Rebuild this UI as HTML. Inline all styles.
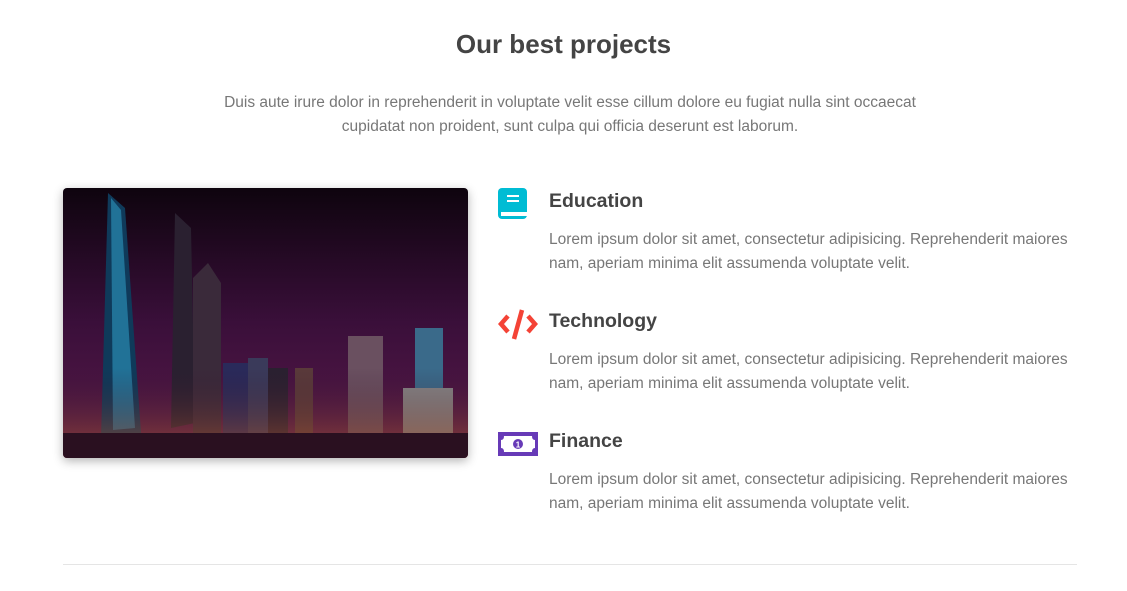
<!DOCTYPE html>
<html><head><style>
body{margin:0;width:1127px;height:591px;background:#fff;font-family:"Liberation Sans",sans-serif;position:relative;overflow:hidden}
h2{position:absolute;top:26px;left:0;width:1127px;text-align:center;margin:0;font-size:26px;font-weight:bold;color:#444;line-height:36px}
.sub{position:absolute;top:91px;left:210px;width:720px;text-align:center;font-size:15.5px;color:#777;line-height:24px}
.img{position:absolute;left:63px;top:188px;width:405px;height:270px;border-radius:4px;overflow:hidden;box-shadow:0 3px 10px rgba(0,0,0,.3)}
.it h4{position:absolute;left:549px;margin:0;font-size:19.5px;font-weight:bold;color:#444;line-height:24px}
.it p{position:absolute;left:549px;margin:0;width:540px;font-size:15.5px;color:#777;line-height:24px}
.ic{position:absolute;left:498px}
hr{position:absolute;top:564px;left:63px;width:1014px;margin:0;border:0;border-top:1px solid #e5e5e5}
</style></head><body>
<h2>Our best projects</h2>
<div class="sub">Duis aute irure dolor in reprehenderit in voluptate velit esse cillum dolore eu fugiat nulla sint occaecat cupidatat non proident, sunt culpa qui officia deserunt est laborum.</div>
<div class="img"><svg width="405" height="270" viewBox="0 0 405 270">
<defs><linearGradient id="s" x1="0" y1="0" x2="0" y2="1"><stop offset="0" stop-color="#0e040e"/><stop offset=".5" stop-color="#3a0f3a"/><stop offset="1" stop-color="#5a1a4a"/></linearGradient>
<linearGradient id="g" x1="0" y1="0" x2="0" y2="1"><stop offset="0" stop-color="#2a1030" stop-opacity="0"/><stop offset="1" stop-color="#b05a30"/></linearGradient></defs>
<rect width="405" height="270" fill="url(#s)"/>
<polygon points="45,5 62,20 78,245 38,250" fill="#0f3a5a"/>
<polygon points="48,10 58,22 72,240 50,242" fill="#2a8ab0" opacity=".7"/>
<polygon points="112,25 128,40 132,235 108,240" fill="#2a2030"/>
<polygon points="130,90 145,75 158,95 158,250 130,250" fill="#3a2a3a"/>
<rect x="160" y="175" width="25" height="80" fill="#2a2a5a"/>
<rect x="185" y="170" width="20" height="85" fill="#3a3a5a"/>
<rect x="205" y="180" width="20" height="75" fill="#2a2030"/>
<rect x="232" y="180" width="18" height="70" fill="#5a3a3a"/>
<rect x="285" y="148" width="35" height="110" fill="#6a5060"/>
<rect x="352" y="140" width="28" height="130" fill="#3a6a8a"/>
<rect x="340" y="200" width="50" height="70" fill="#888"/>
<rect x="0" y="180" width="405" height="90" fill="url(#g)" opacity=".7"/>
<rect x="0" y="245" width="405" height="25" fill="#2a1020"/>
</svg></div>
<div class="it">
<svg class="ic" style="top:188px" width="30" height="32" viewBox="0 0 30 32"><rect x="0" y="0" width="29" height="31" rx="4" fill="#00bcd4"/><rect x="3" y="24" width="26" height="4" fill="#fff"/><rect x="9" y="7" width="12" height="2" fill="#fff"/><rect x="9" y="12" width="12" height="2" fill="#fff"/></svg>
<h4 style="top:189px">Education</h4>
<p style="top:228px">Lorem ipsum dolor sit amet, consectetur adipisicing. Reprehenderit maiores nam, aperiam minima elit assumenda voluptate velit.</p>
<svg class="ic" style="top:308px" width="40" height="33" viewBox="0 0 40 33"><path d="M10 8 L3 16 L10 24 M30 8 L37 16 L30 24" stroke="#f44336" stroke-width="4.5" fill="none"/><path d="M24 2 L16 31" stroke="#f44336" stroke-width="4.5"/></svg>
<h4 style="top:309px">Technology</h4>
<p style="top:348px">Lorem ipsum dolor sit amet, consectetur adipisicing. Reprehenderit maiores nam, aperiam minima elit assumenda voluptate velit.</p>
<svg class="ic" style="top:432px" width="40" height="24" viewBox="0 0 40 24"><rect x="0" y="0" width="40" height="24" fill="#673ab7"/><path d="M6 4 H34 Q34 8 37 8 V16 Q34 16 34 20 H6 Q6 16 3 16 V8 Q6 8 6 4Z" fill="#fff"/><circle cx="20" cy="12" r="5" fill="#673ab7"/><text x="20" y="15.5" font-size="8" fill="#fff" text-anchor="middle" font-family="Liberation Sans" font-weight="bold">1</text></svg>
<h4 style="top:429px">Finance</h4>
<p style="top:468px">Lorem ipsum dolor sit amet, consectetur adipisicing. Reprehenderit maiores nam, aperiam minima elit assumenda voluptate velit.</p>
</div>
<hr>
</body></html>
